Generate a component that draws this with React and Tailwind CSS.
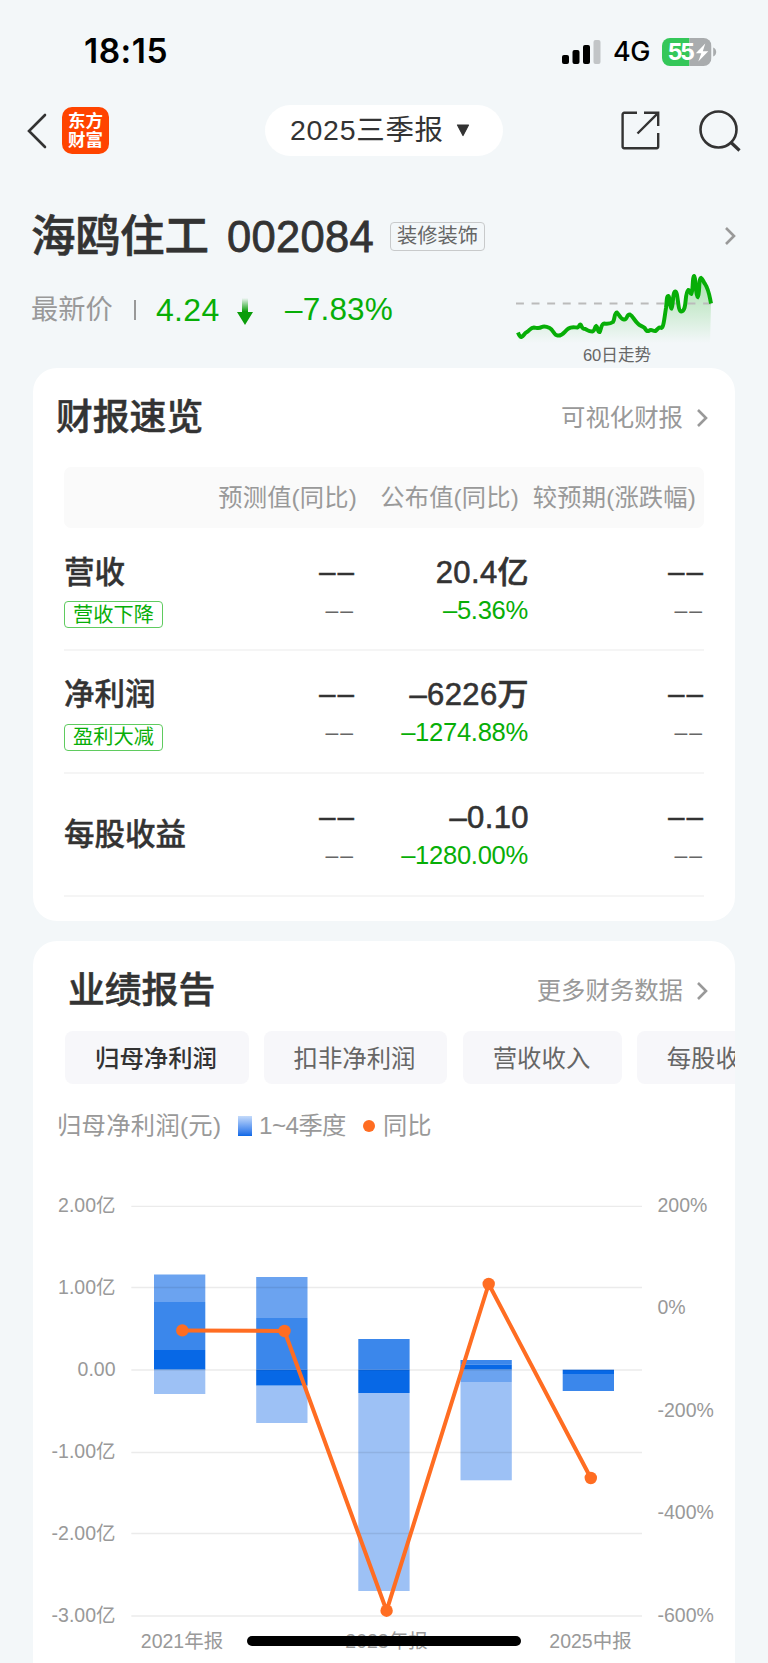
import * as React from "react";

const metrics = [
  {
    label: "营收",
    tag: "营收下降",
    value: "20.4亿",
    change: "–5.36%",
  },
  {
    label: "净利润",
    tag: "盈利大减",
    value: "–6226万",
    change: "–1274.88%",
  },
  {
    label: "每股收益",
    value: "–0.10",
    change: "–1280.00%",
  },
];

const reportTabs = [
  { name: "归母净利润", width: "w-[184px]", gap: "mr-[15px]" },
  { name: "扣非净利润", width: "w-[183px]", gap: "mr-4" },
  { name: "营收收入", width: "w-[159px]", gap: "mr-[15px]" },
  { name: "每股收益", width: "w-[159px]", gap: "" },
];

const Q1 = "#0768e6";
const Q2 = "#3b87eb";
const Q3 = "#6ba3f0";
const Q4 = "#9dc1f5";

// each segment is [top, bottom, fill] in chart units
const bars = [
  { x: 121, parts: [[104.5, 132, Q3], [132, 180, Q2], [180, 199.7, Q1], [199.7, 224, Q4]] },
  { x: 223.2, parts: [[107, 148, Q3], [148, 199.7, Q2], [199.7, 215.7, Q1], [215.7, 253, Q4]] },
  { x: 325.3, parts: [[169, 199.7, Q2], [199.7, 223, Q1], [223, 421, Q4]] },
  { x: 427.5, parts: [[190, 194.5, Q2], [194.5, 199.7, Q1], [199.7, 212, Q3], [212, 310.3, Q4]] },
  { x: 529.7, parts: [[199.7, 204, Q1], [204, 221, Q2]] },
];

const points = [
  [149.3, 160.4],
  [251.5, 161],
  [353.6, 440.7],
  [455.7, 114],
  [557.8, 308],
];

const leftAxis = ["2.00亿", "1.00亿", "0.00", "-1.00亿", "-2.00亿", "-3.00亿"];
const rightAxis = ["200%", "0%", "-200%", "-400%", "-600%"];
const gridLines = [36.3, 117.5, 200, 282.5, 363.5, 446];

export default function App() {
  return (
    <div className="relative flex h-[1663px] w-[768px] flex-col overflow-hidden bg-[#f3f7f9] font-['Liberation_Sans','Noto_Sans_CJK_SC',sans-serif] text-[#333]">
      <StatusBar />
      <NavBar />
      <StockHeader />
      <OverviewCard />
      <ReportCard />

      <div className="absolute left-[247px] top-[1636px] h-[10px] w-[274px] rounded-full bg-black" />
    </div>
  );
}

function StatusBar() {
  return (
    <div className="flex h-[100px] shrink-0 items-center pl-[84px] pr-[51px] pt-[3px] text-black">
      <span className="font-['Inter',sans-serif] text-[33.5px] font-semibold leading-none tracking-[0.5px]">
        18:15
      </span>

      <svg className="ml-auto" width="39" height="24" viewBox="0 0 39 24">
        <rect x="0" y="15" width="7" height="9" rx="2" />
        <rect x="10.5" y="10" width="7" height="14" rx="2" />
        <rect x="21" y="5" width="7" height="19" rx="2" />
        <rect x="31.5" y="0" width="7" height="24" rx="2" fill="#c2c5c7" />
      </svg>

      <span className="ml-3 w-[38px] font-['Inter',sans-serif] text-[27px] font-medium leading-none tracking-[-0.5px]">
        4G
      </span>

      <svg className="ml-[11px]" width="55" height="28" viewBox="0 0 55 28">
        <defs>
          <clipPath id="battery">
            <rect width="49.5" height="28" rx="8" />
          </clipPath>
        </defs>
        <g clipPath="url(#battery)">
          <rect width="27.5" height="28" fill="#34c759" />
          <rect x="27.5" width="22" height="28" fill="#a9acae" />
        </g>
        <path d="M51.2 9.5c4 1.6 4 7.4 0 9z" fill="#a9acae" />
        <text
          x="5.5"
          y="22.4"
          fill="#fff"
          fontFamily="Inter, sans-serif"
          fontSize="23.5"
          fontWeight="700"
          textLength="27.5"
        >
          55
        </text>
        <path d="M43.300 5.500 33.800 15.200h5.500L36.300 23.500 46.300 13.200h-5.500z" fill="#fff" />
      </svg>
    </div>
  );
}

function NavBar() {
  return (
    <nav className="flex h-[61px] shrink-0 items-center pl-[27px] pr-[27px]">
      <svg width="20" height="36" viewBox="0 0 20 36" fill="none" stroke="#333" strokeWidth="2.6" strokeLinecap="round">
        <path d="M18 2 2 18l16 16" />
      </svg>

      <div className="ml-[15px] flex h-[47px] w-[47px] flex-col items-center justify-center rounded-[10px] bg-[#ff4400] pb-[3px] font-['Noto_Sans_CJK_SC',sans-serif] text-[17.5px] font-bold leading-[19px] text-white">
        <span>东方</span>
        <span>财富</span>
      </div>

      <button className="ml-[156px] flex h-[51px] w-[238px] items-center rounded-full bg-white pl-[25px] text-[28.5px] leading-none">
        <span className="w-[153px] whitespace-nowrap tracking-[0.7px]">2025三季报</span>
        <svg className="ml-[13px]" width="14" height="13" viewBox="0 0 14 13">
          <path d="M1.5 1h11L7 11.5z" fill="#333" stroke="#333" strokeWidth="1.2" strokeLinejoin="round" />
        </svg>
      </button>

      <svg className="ml-[118px]" width="39" height="39" viewBox="0 0 39 39" fill="none" stroke="#333" strokeWidth="2.4">
        <path d="M16 1.8H3.2a1.6 1.6 0 0 0-1.6 1.6v32.200a1.6 1.6 0 0 0 1.6 1.6h32.400a1.6 1.6 0 0 0 1.6-1.6V22" />
        <path d="M23 1.8h14.200V15M37.200 1.8 16.500 22.500" />
      </svg>

      <svg className="ml-[39px]" width="42" height="42" viewBox="0 0 42 42" fill="none" stroke="#333" strokeWidth="2.6">
        <circle cx="19.5" cy="19.5" r="18" />
        <path d="m31.500 32 9 8.500" strokeWidth="3.2" />
      </svg>
    </nav>
  );
}

function StockHeader() {
  return (
    <header className="h-[207px] shrink-0 pl-8 pr-8 pt-[49px]">
      <div className="flex h-[52px] items-center">
        <h1 className="-ml-px w-[196px] whitespace-nowrap pt-[3px] text-[44.5px] font-medium leading-none [-webkit-text-stroke:0.6px_#333]">
          海鸥住工
        </h1>
        <span className="w-[146px] pt-[3px] text-[43.5px] leading-none tracking-[0.3px] [-webkit-text-stroke:0.8px_#333]">
          002084
        </span>
        <span className="ml-[17px] flex h-[29px] w-[95px] items-center justify-center rounded-[4px] border border-[#c8cacb] text-[20.3px] leading-none text-[#666]">
          装修装饰
        </span>
        <Chevron className="ml-auto" />
      </div>

      <div className="flex items-start">
        <div className="flex h-[94px] items-center pt-px">
          <span className="-ml-px w-[103px] text-[27.2px] leading-none text-[#999]">最新价</span>
          <span className="h-5 w-[2px] bg-[#999]" />
          <span className="ml-5 w-[81px] text-[32px] leading-none tracking-[0.3px] text-[#07ae07]">4.24</span>
          <svg className="mt-[3px]" width="16" height="27" viewBox="0 0 16 27">
            <defs>
              <linearGradient id="arrow" x1="0" y1="0" x2="0" y2="1">
                <stop offset="0" stopColor="#0a9d0a" stopOpacity="0" />
                <stop offset="0.5" stopColor="#0a9d0a" />
              </linearGradient>
            </defs>
            <path d="M5 0h6v14h5L8 27 0 14h5z" fill="url(#arrow)" />
          </svg>
          <span className="ml-8 text-[31.5px] leading-none tracking-[0.2px] text-[#07ae07]">–7.83%</span>
        </div>

        <div className="ml-auto mr-[22px] flex w-[198px] flex-col items-center pt-[10px]">
          <TrendLine />
          <span className="ml-1 mt-[3px] whitespace-nowrap text-[16.6px] leading-none text-[#666]">60日走势</span>
        </div>
      </div>
    </header>
  );
}

function TrendLine() {
  const line =
    "M2 60.5 C3 63 4 65.5 5.500 65 C8 64 8 61.500 11 60 C14 58 15 55.500 18 55.500 C22 56 23 57 26 55 C29 53.500 31 54.500 34 56 C38 58 38 63 42 63.500 C47 64.500 49 59 53 56.500 C56 54.500 59 55.500 62 55.500 C64 55 64 51.500 65.500 53 C67 56 67 57 70 57 C73 58.500 73 59.500 77 59.500 C80 59 79 55 81 54 C83 55 82 60 84.500 60 C86 58 86 51.500 89 51.500 C93 52 96 51.500 98 50 C100 47 99 41 102 40.500 C104 42 105 47 109 47.500 C113 48 111 42.500 115 42.500 C118 44 120 49 123 51.500 C125 54 128 54 130 56 C131 58 132 59.500 134 59 C137 56.500 138 59.500 141 59 C144 56 145 54.500 147 56 C149 56 150 45 151.500 36 C152.500 28 152 24 154 24 C156 25 155 36 157 36.500 C159 34 158 19.500 161 19.500 C164 20 163 39.500 167 39.500 C173 39 170 21 174 18 C176 18 176 22 177 22 C179 20 178 4.500 180 4 C182 5 181 24 183.500 25 C186 22 184 7 187 6 C189 7 189 10 191 12 C195 18 195.500 25 197 31.500";

  return (
    <svg className="self-end" width="198" height="73" viewBox="0 0 200 73" preserveAspectRatio="none" fill="none">
      <defs>
        <linearGradient id="trend" x1="0" y1="0" x2="0" y2="1">
          <stop offset="0" stopColor="#07ae07" stopOpacity="0.32" />
          <stop offset="1" stopColor="#07ae07" stopOpacity="0" />
        </linearGradient>
      </defs>
      <path d={`${line} L196 71 L2 71Z`} fill="url(#trend)" />
      <path d="M0 31.500H197" stroke="#bbb" strokeWidth="2" strokeDasharray="8 7.750" />
      <path d={line} stroke="#07ae07" strokeWidth="4" />
    </svg>
  );
}

function Chevron({ className = "" }) {
  return (
    <svg className={className} width="12" height="20" viewBox="0 0 12 20" fill="none" stroke="#999" strokeWidth="2.6">
      <path d="m2 2 8 8-8 8" />
    </svg>
  );
}

function CardHeader({ title, link }) {
  return (
    <div className="flex items-center">
      <h2 className="text-[36.8px] font-medium leading-none [-webkit-text-stroke:0.5px_#333]">{title}</h2>
      <span className="ml-auto mr-[13px] text-[24.4px] leading-none text-[#999]">{link}</span>
      <Chevron />
    </div>
  );
}

function OverviewCard() {
  return (
    <section className="mx-[33px] h-[553px] shrink-0 rounded-[24px] bg-white pt-8">
      <div className="pl-[23px] pr-[27px]">
        <CardHeader title="财报速览" link="可视化财报" />
      </div>

      <div className="mx-[31px]">
        <div className="mb-px mt-[30px] grid h-[61px] grid-cols-[293px_162px_177px] items-center rounded-[7px] bg-[#fafafa] pt-px text-right text-[24.3px] leading-none tracking-[0.15px] text-[#999]">
          <span>预测值(同比)</span>
          <span>公布值(同比)</span>
          <span className="whitespace-nowrap">较预期(涨跌幅)</span>
        </div>

        {metrics.map((item) => (
          <MetricRow key={item.label} item={item} />
        ))}
      </div>
    </section>
  );
}

function MetricRow({ item }) {
  return (
    <div className="grid h-[122.67px] grid-cols-[160px_130px_174px_175px] border-b-2 border-[#f5f5f5]">
      <div className={item.tag ? "pt-7" : "flex items-center"}>
        <p className="text-[30.5px] font-medium leading-none [-webkit-text-stroke:0.4px_#333]">{item.label}</p>
        {item.tag && (
          <span className="mt-[14px] flex h-[27px] w-[99px] items-center justify-center rounded-[4px] border border-[#5fcb5f] text-[20.2px] leading-none text-[#07ae07]">
            {item.tag}
          </span>
        )}
      </div>

      <Dashes />

      <div className="whitespace-nowrap pt-7 text-right">
        <p className="-mr-px text-[31px] font-medium leading-none tracking-[0.4px] [-webkit-text-stroke:0.6px_#333]">
          {item.value}
        </p>
        <p className="mt-[10px] text-[25.6px] leading-none tracking-[-0.3px] text-[#07ae07]">
          {item.change}
        </p>
      </div>

      <Dashes />
    </div>
  );
}

function Dashes() {
  return (
    <div className="pt-[28px] text-right">
      <p className="-mr-[2px] text-[29px] font-medium leading-[31px] tracking-[2.2px] [-webkit-text-stroke:0.6px_#333]">––</p>
      <p className="-mr-px mt-[9px] text-[23px] leading-[26px] tracking-[2px] text-[#666]">––</p>
    </div>
  );
}

function ReportCard() {
  const [active, setActive] = React.useState("归母净利润");

  return (
    <section className="mx-[33px] mt-5 h-[760px] shrink-0 overflow-hidden rounded-t-[24px] bg-white pt-8">
      <div className="pl-[35px] pr-[27px]">
        <CardHeader title="业绩报告" link="更多财务数据" />
      </div>

      <div className="mt-[21px] flex pl-8">
        {reportTabs.map((tab) => (
          <button
            key={tab.name}
            onClick={() => setActive(tab.name)}
            className={`h-[53px] shrink-0 rounded-[8px] bg-[#f7f7fa] pr-[2px] pt-[3px] text-[24.4px] leading-none ${tab.width} ${tab.gap} ${
              active === tab.name ? "font-medium text-[#333]" : "text-[#666]"
            }`}
          >
            {tab.name}
          </button>
        ))}
      </div>

      <div className="mt-[26px] flex h-8 items-center pl-6 text-[24.3px] leading-none text-[#999]">
        <span className="w-[181px] tracking-[0.3px]">归母净利润(元)</span>
        <span className="h-5 w-[14px] bg-linear-to-b from-[#c4dafa] to-[#0768e6]" />
        <span className="ml-[7px] w-[104px] tracking-[-0.6px]">1~4季度</span>
        <span className="h-3 w-3 rounded-full bg-[#ff6d22]" />
        <span className="ml-2">同比</span>
      </div>

      <ProfitChart />
    </section>
  );
}

function ProfitChart() {
  return (
    <svg className="mt-[28px]" width="702" height="500" viewBox="0 0 702 500">
      {bars.map((bar) =>
        bar.parts.map(([top, bottom, fill]) => (
          <rect key={`${bar.x}-${top}`} x={bar.x} y={top} width="51.3" height={bottom - top} fill={fill} />
        )),
      )}

      {gridLines.map((y) => (
        <path key={y} d={`M98.300 ${y}H609`} stroke="#000" strokeOpacity="0.08" strokeWidth="1.3" />
      ))}

      <polyline
        points={points.map((point) => point.join(",")).join(" ")}
        fill="none"
        stroke="#ff6d22"
        strokeWidth="4"
        strokeLinejoin="round"
      />
      {points.map(([x, y]) => (
        <circle key={x} cx={x} cy={y} r="6.2" fill="#ff6d22" />
      ))}

      <g fill="#999" fontSize="19.5">
        {leftAxis.map((label, i) => (
          <text key={label} x="82.500" y={41.7 + i * 82} textAnchor="end">
            {label}
          </text>
        ))}
        {rightAxis.map((label, i) => (
          <text key={label} x="624.500" y={41.7 + i * 102.5}>
            {label}
          </text>
        ))}
        <text x="149" y="477.500" textAnchor="middle">2021年报</text>
        <text x="353.500" y="477.500" textAnchor="middle">2023年报</text>
        <text x="557.500" y="477.500" textAnchor="middle">2025中报</text>
      </g>
    </svg>
  );
}
